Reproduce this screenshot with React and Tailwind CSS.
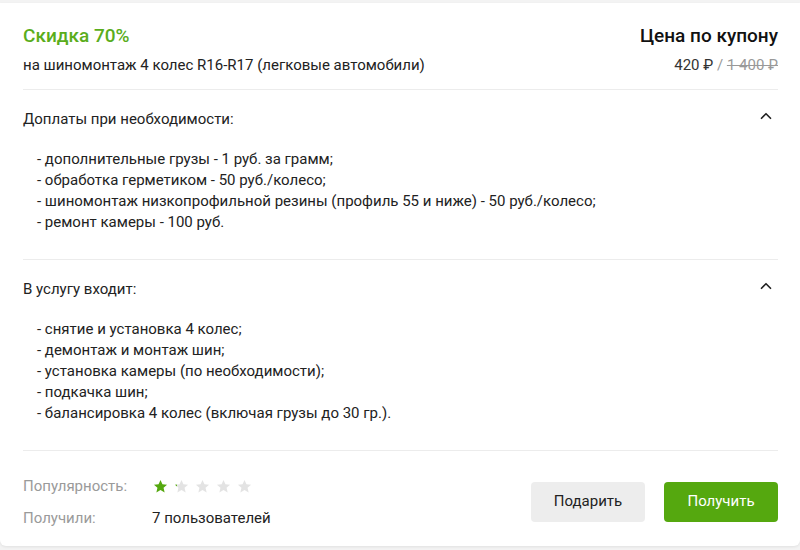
import { ChevronUp } from 'lucide-react'

const EXTRAS = [
  '- дополнительные грузы - 1 руб. за грамм;',
  '- обработка герметиком - 50 руб./колесо;',
  '- шиномонтаж низкопрофильной резины (профиль 55 и ниже) - 50 руб./колесо;',
  '- ремонт камеры - 100 руб.',
]

const INCLUDED = [
  '- снятие и установка 4 колес;',
  '- демонтаж и монтаж шин;',
  '- установка камеры (по необходимости);',
  '- подкачка шин;',
  '- балансировка 4 колес (включая грузы до 30 гр.).',
]

function Star({ fill = 0 }) {
  const id = `star-grad-${fill}`
  return (
    <svg width="15" height="15" viewBox="0 0 24 24">
      <defs>
        <linearGradient id={id} x1="0" x2="1" y1="0" y2="0">
          <stop offset={fill} stopColor="#55a80f" />
          <stop offset={fill} stopColor="#e3e3e3" />
        </linearGradient>
      </defs>
      <path
        d="M12 1.5l3.1 6.9 7.4.7-5.6 5 1.7 7.4L12 17.6l-6.6 3.9 1.7-7.4-5.6-5 7.4-.7z"
        fill={`url(#${id})`}
      />
    </svg>
  )
}

function Section({ title, items }) {
  return (
    <div className="border-t border-[#ececec] pt-[19px] pb-[26px]">
      <div className="flex items-center justify-between h-[20px]">
        <span className="text-[15px] text-[#222]">{title}</span>
        <ChevronUp size={18} strokeWidth={2.2} className="text-[#222] mr-[3px] -mt-[6px]" />
      </div>
      <ul className="mt-[20px] pl-[14px] text-[15px] leading-[21px] text-[#222]">
        {items.map((t) => (
          <li key={t}>{t}</li>
        ))}
      </ul>
    </div>
  )
}

export default function App() {
  return (
    <div className="min-h-screen bg-[#f3f3f3] pt-[3px] font-['Roboto',_'Liberation_Sans',_sans-serif]">
      <div className="bg-white rounded-b-[6px] shadow-[0_1px_3px_rgba(0,0,0,0.08)] h-[543px] px-[23px] pr-[22px]">

        {/* Header */}
        <div className="flex justify-between pt-[21px] h-[86px]">
          <div>
            <div className="text-[19px] font-medium text-[#5aad1c] leading-[24px]">Скидка 70%</div>
            <div className="text-[15px] text-[#222] mt-[6px]">
              на шиномонтаж 4 колес R16-R17 (легковые автомобили)
            </div>
          </div>
          <div className="text-right">
            <div className="text-[19px] font-medium text-[#111] leading-[24px]">Цена по купону</div>
            <div className="text-[15px] mt-[6px] text-[#333]">
              420 ₽ <span className="text-[#999]">/</span>{' '}
              <span className="text-[#999] line-through">1 400 ₽</span>
            </div>
          </div>
        </div>

        <Section title="Доплаты при необходимости:" items={EXTRAS} />
        <Section title="В услугу входит:" items={INCLUDED} />

        {/* Footer */}
        <div className="border-t border-[#ececec] flex items-center justify-between pt-[25px]">
          <div className="grid grid-cols-[129px_auto] gap-y-[11px] text-[15px] leading-[21px]">
            <span className="text-[#9a9a9a]">Популярность:</span>
            <div className="flex items-center gap-[6px] pl-[1px]">
              <Star fill={1} />
              <Star fill={0.12} />
              <Star fill={0} />
              <Star fill={0} />
              <Star fill={0} />
            </div>
            <span className="text-[#9a9a9a]">Получили:</span>
            <span className="text-[#222]">7 пользователей</span>
          </div>
          <div className="flex gap-[19px] -mt-[2px]">
            <button className="w-[114px] h-[40px] rounded-[4px] bg-[#ededed] text-[15px] text-[#222]">
              Подарить
            </button>
            <button className="w-[114px] h-[40px] rounded-[4px] bg-[#55a80f] text-[15px] text-white">
              Получить
            </button>
          </div>
        </div>
      </div>
    </div>
  )
}
